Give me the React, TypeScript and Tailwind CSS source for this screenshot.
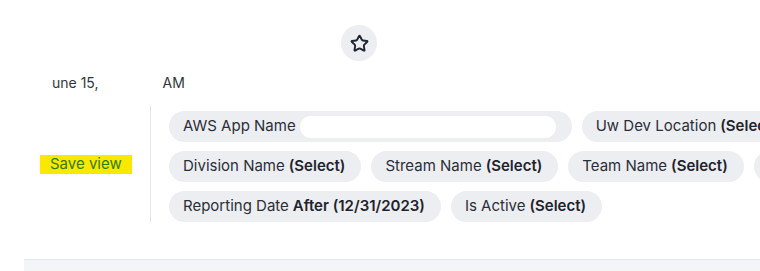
import { Star } from 'lucide-react';

type Chip = { label: string; value?: string; hidden?: boolean };

const chips: Chip[] = [
  { label: 'AWS App Name', hidden: true },
  { label: 'Uw Dev Location', value: '(Select)' },
  { label: 'Division Name', value: '(Select)' },
  { label: 'Stream Name', value: '(Select)' },
  { label: 'Team Name', value: '(Select)' },
  { label: 'Team Lead', value: '(Select)' },
  { label: 'Reporting Date', value: 'After (12/31/2023)' },
  { label: 'Is Active', value: '(Select)' },
];

function FilterChip({ chip }: { chip: Chip }) {
  return (
    <span className="flex h-[31px] shrink-0 items-center whitespace-nowrap rounded-full bg-[#eceef2] pl-[14px] pr-[16px] text-[15px] text-[#2b2f38]">
      {chip.label}
      {chip.hidden ? (
        <span className="ml-[4px] h-[22px] w-[256px] rounded-full bg-white" />
      ) : (
        <span className="ml-[4px] font-semibold text-[#1f232b]">{chip.value}</span>
      )}
    </span>
  );
}

export default function App() {
  return (
    <div className="relative h-[271px] w-[760px] overflow-hidden bg-white font-['Inter',sans-serif]">
      <div className="flex items-center pl-[341px] pt-[25px]">
        <button className="flex h-[36px] w-[36px] items-center justify-center rounded-full bg-[#eceef2] text-[#1e2430]">
          <Star size={19} strokeWidth={2.4} />
        </button>
      </div>
      <div className="mt-[13px] flex h-[18px] items-center text-[14px] leading-none text-[#33363d]">
        <span className="ml-[52px]">une 15,</span>
        <span className="ml-[64px]">AM</span>
      </div>

      <div className="mt-[14px] flex">
        <div className="flex w-[150px] shrink-0 items-center">
          <span className="ml-[40px] flex h-[19px] items-center whitespace-nowrap bg-[#fbe800] px-[10px] text-[15px] text-[#2f7d10]">
            Save view
          </span>
        </div>
        <div className="w-[820px] shrink-0 border-l border-[#e4e6ea] pl-[18px] pt-[5px]">
          <div className="flex flex-wrap gap-x-[10px] gap-y-[9px] pr-[30px]">
            {chips.map((c) => (
              <FilterChip key={c.label} chip={c} />
            ))}
          </div>
        </div>
      </div>

      <div className="absolute bottom-0 left-[24px] right-0 h-[12px] border-t border-[#e6e8ec] bg-[#f4f5f7]" />
    </div>
  );
}
